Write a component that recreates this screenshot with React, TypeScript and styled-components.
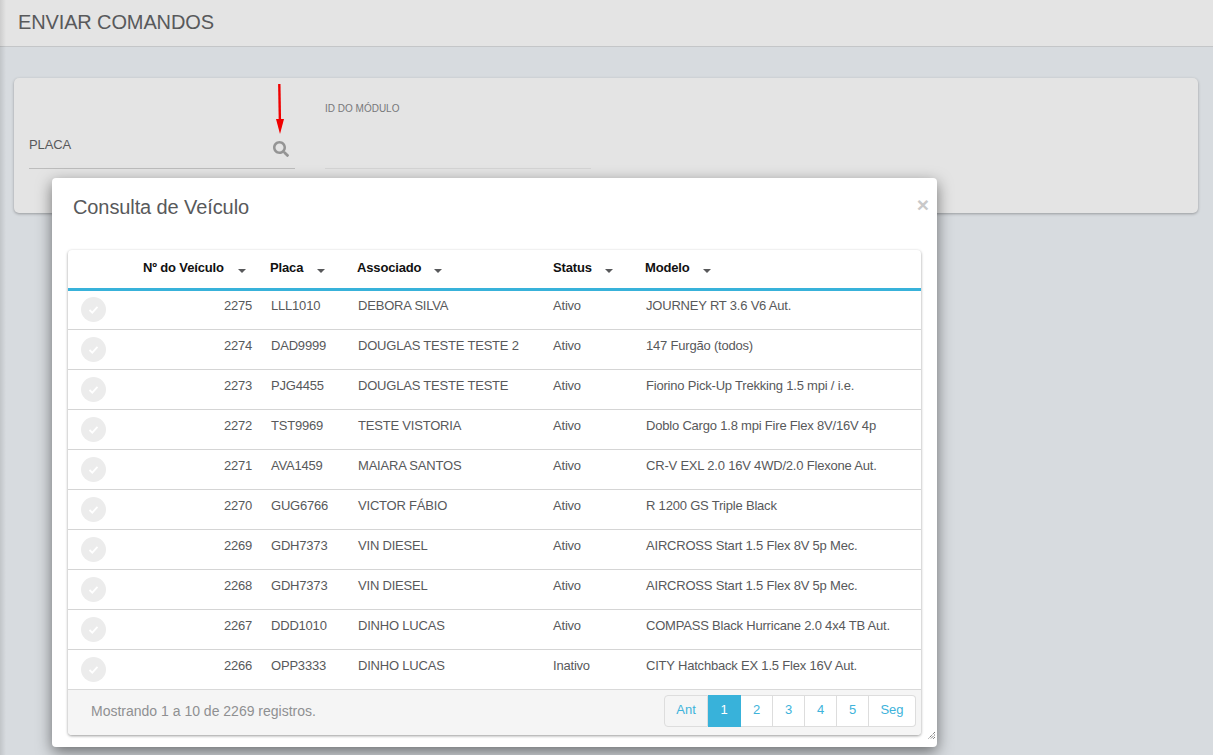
import React from "react";
import styled, { createGlobalStyle } from "styled-components";
import { FaSearch } from "react-icons/fa";

const Global = createGlobalStyle`
  html, body { margin: 0; padding: 0; height: 100%; overflow: hidden; background: #d7dbdf; }
  body { font-family: "Liberation Sans", Arial, sans-serif; color: #58595b; }
  * { box-sizing: border-box; }
`;

const Page = styled.div`
  position: relative;
  width: 1213px;
  height: 755px;
  overflow: hidden;
  background: #d7dbdf;
  &::after {
    content: "";
    position: absolute;
    left: 0;
    top: 0;
    bottom: 0;
    width: 6px;
    background: linear-gradient(to right, rgba(0, 0, 0, 0.1), rgba(0, 0, 0, 0));
  }
`;
const Header = styled.header`
  height: 47px;
  background: #e4e4e4;
  border-bottom: 1px solid #c4c6c8;
  padding: 9px 18px 0;
`;
const Title = styled.h1`
  margin: 0;
  font-size: 20px;
  line-height: 26px;
  font-weight: 400;
  letter-spacing: -0.13px;
  color: #58595b;
`;
const Content = styled.main`
  padding: 31px 15px 0 14px;
`;
const FilterPanel = styled.section`
  height: 135px;
  background: #e4e4e4;
  border-radius: 5px;
  box-shadow: 0 1px 3px rgba(0, 0, 0, 0.3);
  padding: 0 15px;
  display: flex;
  gap: 30px;
`;
const Field = styled.div<{ $light?: boolean }>`
  position: relative;
  width: 266px;
  height: 91px;
  border-bottom: 1px solid ${(p) => (p.$light ? "#d5d5d5" : "#bdbdbd")};
`;
const FloatLabel = styled.label`
  position: absolute;
  left: 0;
  top: 59px;
  font-size: 13px;
  line-height: 16px;
  letter-spacing: -0.1px;
  color: #58595b;
`;
const SmallLabel = styled.label`
  position: absolute;
  left: 0;
  top: 25px;
  font-size: 10px;
  line-height: 12px;
  color: #77787a;
`;
const SearchGlyph = styled(FaSearch)`
  position: absolute;
  left: 244px;
  top: 63px;
  width: 16px;
  height: 16px;
  color: #949494;
`;
const Arrow = styled.svg`
  position: absolute;
  left: 272px;
  top: 83px;
  width: 16px;
  height: 52px;
`;
const Modal = styled.div`
  position: absolute;
  left: 52px;
  top: 178px;
  width: 885px;
  height: 569px;
  background: #fff;
  border-radius: 4px;
  box-shadow: 0 5px 15px rgba(0, 0, 0, 0.5);
  padding: 0 16px;
`;
const ModalHead = styled.div`
  height: 72px;
  padding: 17px 0 0 5px;
  display: flex;
  justify-content: space-between;
`;
const ModalTitle = styled.h2`
  margin: 0;
  font-size: 20px;
  line-height: 24px;
  font-weight: 400;
  letter-spacing: -0.1px;
  color: #58595b;
`;
const Close = styled.span`
  font-size: 21px;
  font-weight: 700;
  line-height: 22px;
  margin: -1px -8px 0 0;
  color: #c9c9c9;
`;
const TableBox = styled.div`
  width: 853px;
  height: 485px;
  border-radius: 4px;
  box-shadow: 0 1px 3px rgba(0, 0, 0, 0.4);
  overflow: hidden;
  display: flex;
  flex-direction: column;
`;
const Table = styled.table`
  width: 100%;
  border-collapse: collapse;
  table-layout: fixed;
`;
const HeadRow = styled.tr`
  height: 39px;
  border-bottom: 3px solid #38b2da;
`;
const Th = styled.th<{ $w: number }>`
  width: ${(p) => p.$w}px;
  padding: 0 0 3px 10px;
  text-align: left;
  font-size: 13px;
  font-weight: 700;
  letter-spacing: -0.15px;
  color: #111;
  white-space: nowrap;
`;
const Caret = styled.i<{ $gap: number }>`
  display: inline-block;
  width: 0;
  height: 0;
  margin-left: ${(p) => p.$gap}px;
  vertical-align: -1px;
  border-left: 4px solid transparent;
  border-right: 4px solid transparent;
  border-top: 4px solid #58595b;
`;
const Row = styled.tr<{ $last?: boolean }>`
  height: 40px;
  border-bottom: ${(p) => (p.$last ? "0" : "1px solid #d5d5d5")};
`;
const Td = styled.td<{ $right?: boolean; $pad?: number }>`
  padding: 0 ${(p) => (p.$right ? "8px" : "0")} 8px ${(p) => p.$pad ?? 11}px;
  text-align: ${(p) => (p.$right ? "right" : "left")};
  font-size: 13px;
  letter-spacing: -0.2px;
  color: #58595b;
  white-space: nowrap;
`;
const CheckCell = styled.td`
  padding: 0 0 0 13px;
`;
const CheckCircle = styled.span`
  display: flex;
  align-items: center;
  justify-content: center;
  width: 25px;
  height: 25px;
  border-radius: 50%;
  background: #ececec;
`;
const Footer = styled.div`
  margin-top: auto;
  height: 46px;
  background: #f5f5f5;
  border-top: 1px solid #d9d9d9;
  padding: 5px 5px 0 23px;
  display: flex;
  justify-content: space-between;
`;
const Info = styled.span`
  font-size: 14px;
  line-height: 32px;
  color: #8f9092;
`;
const Pager = styled.div`
  display: flex;
  height: 32px;
`;
const PageButton = styled.span<{ $w: number; $active?: boolean; $muted?: boolean }>`
  width: ${(p) => p.$w}px;
  text-align: center;
  font-size: 13px;
  line-height: 27px;
  color: ${(p) => (p.$active ? "#fff" : "#3eb3db")};
  background: ${(p) => (p.$active ? "#38b2da" : p.$muted ? "#f5f5f5" : "#fff")};
  border: 1px solid ${(p) => (p.$active ? "#38b2da" : "#dddddd")};
  border-left: 0;
  &:first-child {
    border-left: 1px solid #dddddd;
    border-radius: 4px 0 0 4px;
  }
  &:last-child {
    border-radius: 0 4px 4px 0;
  }
`;
const Grip = styled.svg`
  position: absolute;
  right: 1px;
  bottom: 7px;
  width: 9px;
  height: 9px;
`;

const rows = [
  ["2275", "LLL1010", "DEBORA SILVA", "Ativo", "JOURNEY RT 3.6 V6 Aut."],
  ["2274", "DAD9999", "DOUGLAS TESTE TESTE 2", "Ativo", "147 Furgão (todos)"],
  ["2273", "PJG4455", "DOUGLAS TESTE TESTE", "Ativo", "Fiorino Pick-Up Trekking 1.5 mpi / i.e."],
  ["2272", "TST9969", "TESTE VISTORIA", "Ativo", "Doblo Cargo 1.8 mpi Fire Flex 8V/16V 4p"],
  ["2271", "AVA1459", "MAIARA SANTOS", "Ativo", "CR-V EXL 2.0 16V 4WD/2.0 Flexone Aut."],
  ["2270", "GUG6766", "VICTOR FÁBIO", "Ativo", "R 1200 GS Triple Black"],
  ["2269", "GDH7373", "VIN DIESEL", "Ativo", "AIRCROSS Start 1.5 Flex 8V 5p Mec."],
  ["2268", "GDH7373", "VIN DIESEL", "Ativo", "AIRCROSS Start 1.5 Flex 8V 5p Mec."],
  ["2267", "DDD1010", "DINHO LUCAS", "Ativo", "COMPASS Black Hurricane 2.0 4x4 TB Aut."],
  ["2266", "OPP3333", "DINHO LUCAS", "Inativo", "CITY Hatchback EX 1.5 Flex 16V Aut."],
];

const pages: { label: string; w: number; active?: boolean; muted?: boolean }[] = [
  { label: "Ant", w: 44, muted: true },
  { label: "1", w: 33, active: true },
  { label: "2", w: 32 },
  { label: "3", w: 32 },
  { label: "4", w: 32 },
  { label: "5", w: 32 },
  { label: "Seg", w: 47 },
];

export default function App() {
  return (
    <Page>
      <Global />
      <Header>
        <Title>ENVIAR COMANDOS</Title>
      </Header>
      <Content>
        <FilterPanel>
          <Field>
            <FloatLabel>PLACA</FloatLabel>
            <SearchGlyph />
          </Field>
          <Field $light>
            <SmallLabel>ID DO MÓDULO</SmallLabel>
          </Field>
        </FilterPanel>
      </Content>
      <Arrow viewBox="0 0 16 52">
        <path d="M7.3 1 L7.9 38" stroke="#f00000" strokeWidth="2.4" fill="none" />
        <path d="M4 36 L12 36 L8 51 Z" fill="#f00000" />
      </Arrow>
      <Modal>
        <ModalHead>
          <ModalTitle>Consulta de Veículo</ModalTitle>
          <Close>×</Close>
        </ModalHead>
        <TableBox>
          <Table>
            <thead>
              <HeadRow>
                <Th $w={65} />
                <Th $w={127}>Nº do Veículo<Caret $gap={14} /></Th>
                <Th $w={87}>Placa<Caret $gap={14} /></Th>
                <Th $w={196}>Associado<Caret $gap={13} /></Th>
                <Th $w={92}>Status<Caret $gap={13} /></Th>
                <Th $w={286}>Modelo<Caret $gap={13} /></Th>
              </HeadRow>
            </thead>
            <tbody>
              {rows.map((r, i) => (
                <Row key={r[0]} $last={i === rows.length - 1}>
                  <CheckCell>
                    <CheckCircle>
                      <svg width="13" height="13" viewBox="0 0 13 13">
                        <path d="M2.5 7 L5.3 9.6 L10.5 3.8" fill="none" stroke="#fff" strokeWidth="1.8" />
                      </svg>
                    </CheckCircle>
                  </CheckCell>
                  <Td $right>{r[0]}</Td>
                  <Td>{r[1]}</Td>
                  <Td>{r[2]}</Td>
                  <Td $pad={10}>{r[3]}</Td>
                  <Td>{r[4]}</Td>
                </Row>
              ))}
            </tbody>
          </Table>
          <Footer>
            <Info>Mostrando 1 a 10 de 2269 registros.</Info>
            <Pager>
              {pages.map((p) => (
                <PageButton key={p.label} $w={p.w} $active={p.active} $muted={p.muted}>
                  {p.label}
                </PageButton>
              ))}
            </Pager>
          </Footer>
        </TableBox>
        <Grip viewBox="0 0 9 9">
          <path d="M8 1 L1 8 M8 3.5 L3.5 8 M8 6 L6 8" stroke="#444" strokeWidth="1" strokeDasharray="1 1" />
        </Grip>
      </Modal>
    </Page>
  );
}
